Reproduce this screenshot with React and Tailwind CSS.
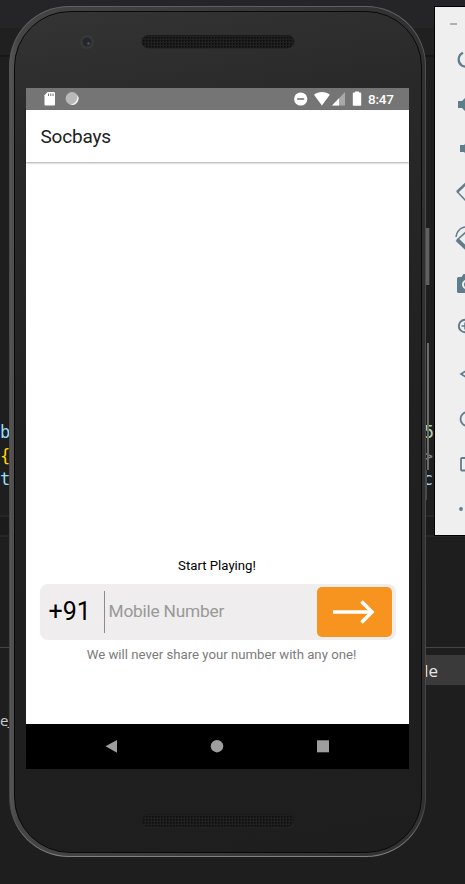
import React from "react";

const sans = "font-['Roboto','Noto_Sans',sans-serif]";

function Editor() {
  return (
    <div className="flex h-[884px] w-[465px] flex-col bg-[#1e1e1e] font-['DejaVu_Sans_Mono','Liberation_Mono',monospace] text-[17px] leading-[23px]">
      <div className="h-[28px] bg-[#252527]" />
      <div className="h-[29px] border-b-2 border-[#171717] bg-[#202021]" />
      <div className="h-[364px]" />
      <div className="flex h-[24px] justify-between text-[#9cdcfe]">
        <span>b</span>
        <span className="mr-[31px] text-[#b5cea8]">5</span>
      </div>
      <div className="flex h-[23px] justify-between text-[#ffd700]">
        <span>{"{"}</span>
        <span className="mr-[32px] text-[#808080]">&gt;</span>
      </div>
      <div className="flex h-[24px] justify-between text-[#9cdcfe]">
        <span>t</span>
        <span className="mr-[32px]">c</span>
      </div>
      <div className="h-[23px]" />
      <div className="h-[22px] border-y-2 border-[#262627] bg-[#1b1b1b]" />
      <div className="h-[110px]" />
      <div className="h-px bg-[#454545]" />
      <div className="h-[7px]" />
      <div className="ml-[418px] h-[30px] bg-[#3a3a3a] font-['Open_Sans','Noto_Sans',sans-serif] text-[17px] leading-[31px] text-[#e5e5e5]">
        <span>de</span>
      </div>
      <div className="h-[24px]" />
      <div className="font-['Open_Sans','Noto_Sans',sans-serif] text-[15px] leading-[23px] tracking-[-1px] text-[#cccccc]">e_</div>
    </div>
  );
}

function Speaker({ id }) {
  return (
    <svg width="157" height="16" viewBox="0 0 157 16">
      <defs>
        <pattern id={id} width="3" height="3" patternUnits="userSpaceOnUse">
          <rect width="3" height="3" fill="#202020" />
          <rect width="1.6" height="1.6" fill="#0c0c0c" />
        </pattern>
      </defs>
      <rect x="2" y="2.2" width="152.500" height="12.5" rx="6.2" fill="#444" opacity=".5" />
      <rect x="2" y="1.5" width="152" height="12.5" rx="6.2" fill={`url(#${id})`} stroke="#1a1a1a" />
    </svg>
  );
}

function StatusBar() {
  return (
    <div className="flex h-[22px] shrink-0 items-center justify-between bg-[#757575] text-white">
      <svg width="60" height="22" viewBox="0 0 60 22">
        <path d="M21.6 4H28a1 1 0 0 1 1 1v11.500a1 1 0 0 1-1 1h-8.500a1 1 0 0 1-1-1V7.200z" fill="#fff" />
        <path d="M22.500 5.500v2.500M24.800 5.500v2.500M27 5.500v2.500" stroke="#757575" strokeWidth="1" />
        <circle cx="46" cy="10.500" r="6.400" fill="#b9b9b9" />
        <path d="M51.500 7a6.400 6.400 0 0 1-7.500 9.500c4 .2 7.800-3.500 7.500-9.500z" fill="#f3f3f3" />
      </svg>
      <div className="flex items-center">
        <svg width="75" height="22" viewBox="0 0 75 22">
          <circle cx="7.700" cy="11" r="6.600" fill="#fff" />
          <path d="M4.200 11h7" stroke="#757575" strokeWidth="1.600" />
          <path d="M21 6.800C25.300 3.200 32.800 3.200 36.800 6.800L28.900 17.500z" fill="#fff" />
          <path d="M52 4v13.500H39z" fill="#a9a9a9" />
          <path d="M46 10.200v7.300h-7z" fill="#fff" />
          <path d="M62 4.500v-1h4v1h1.500a.7.7 0 0 1 .7.700V17a.7.7 0 0 1-.7.700h-7a.7.7 0 0 1-.7-.7V5.200a.7.7 0 0 1 .7-.7z" fill="#fff" />
        </svg>
        <span className="mr-[15px] w-[26px] text-[13.500px] font-medium leading-[22px] tracking-[-0.2px] whitespace-nowrap">8:47</span>
      </div>
    </div>
  );
}

function Screen() {
  return (
    <div className={`mx-auto flex h-[681px] w-[383px] flex-col bg-white ${sans}`}>
      <StatusBar />
      <header className="flex h-[52px] shrink-0 items-center pl-[14.500px] pt-[2px] text-[19px] tracking-[-0.2px] text-[#212121] shadow-[0_1px_2px_rgba(0,0,0,0.35)]">
        Socbays
      </header>
      <main className="flex flex-1 flex-col justify-end pb-[60px]">
        <p className="pr-px text-center text-[13.200px] leading-[18px] text-black">Start Playing!</p>
        <div className="mx-[13.500px] mt-[9px] flex h-[56px] items-center rounded-[8px] bg-[#efeded] pr-[3.500px]">
          <span className="w-[64px] pl-[9px] text-[25px] text-black">+91</span>
          <span className="h-[42px] w-[1.500px] bg-[#8c8c8c]" />
          <span className="ml-[3.500px] flex-1 text-[17.300px] tracking-[-0.2px] text-[#999]">Mobile Number</span>
          <button className="flex h-[50px] w-[75px] items-center justify-center rounded-[5px] bg-[#f79420]">
            <svg width="44" height="26" viewBox="0 0 44 26" fill="none" stroke="#fff" strokeWidth="3.600">
              <path d="M0 13h39M28.500 2.500L39 13 28.500 23.500" />
            </svg>
          </button>
        </div>
        <p className="mt-[6px] pl-[8px] text-center text-[13.200px] leading-[18px] text-[#7b7b7b]">
          We will never share your number with any one!
        </p>
      </main>
      <nav className="flex h-[45px] shrink-0 items-center bg-black">
        <svg width="383" height="45" viewBox="0 0 383 45" fill="#9e9e9e">
          <path d="M79.500 22.300L91 16v12.700z" />
          <circle cx="191" cy="22.200" r="6.200" />
          <rect x="291" y="16.300" width="12" height="12" />
        </svg>
      </nav>
    </div>
  );
}

function Phone() {
  return (
    <div className="absolute left-[9px] top-[6px] h-[851px] w-[417px] rounded-[60px] bg-[linear-gradient(180deg,#606060_0%,#4c4c4c_10%,#444_94%,#808080_100%)] p-px">
      <div className="h-full rounded-[59px] bg-[linear-gradient(90deg,#555_0%,#454545_2%,#3a3a3a_50%,#303030_100%)] p-[3.500px]">
        <div className="flex h-full flex-col rounded-[56px] border border-[#090909] bg-[linear-gradient(170deg,#343435_0%,#292929_15%,#202020_50%,#1e1e1e_100%)]">
          <div className="flex h-[76.500px] items-start pl-[65px] pt-[22px]">
            <svg width="14" height="16" viewBox="0 0 14 16">
              <circle cx="7" cy="8" r="7" fill="#37383a" />
              <circle cx="7" cy="8" r="4.500" fill="#24262b" />
              <circle cx="8.500" cy="9.500" r="1.300" fill="#505563" />
            </svg>
            <div className="ml-[46px]"><Speaker id="earpiece" /></div>
          </div>
          <Screen />
          <div className="flex h-[82px] justify-center pl-[2px] pt-[44px]">
            <Speaker id="loudspeaker" />
          </div>
        </div>
      </div>
    </div>
  );
}

function SideButtons() {
  return (
    <div className="absolute left-[426px] top-[228px] flex flex-col">
      <div className="h-[57px] w-[4px] border-r border-[#353535] bg-[#606060]" />
      <div className="mt-[58px] ml-px h-[127px] w-[2px] bg-[#6a6a6a]" />
      <div className="h-[30px] w-px bg-[#4b4b4b]" />
    </div>
  );
}

const tools = [
  ["power", <path d="M28 15.700a7.500 7.500 0 0 0-1 13l4 1.300" strokeWidth="2.200" />],
  ["volume up", <path d="M23 19h4l5-5v17l-5-5h-4z" fill="#607d8b" stroke="none" />],
  ["volume down", <path d="M25 18h4l5-5v17l-5-5h-4z" fill="#607d8b" stroke="none" />],
  ["rotate left", <><path d="M31 11.500L22 20" strokeWidth="2.600" /><path d="M22 19.500l9 9.500" strokeWidth="1.500" /></>],
  ["rotate right", <><path d="M32 14L22 23" strokeWidth="1.600" /><path d="M22 22.500l10 9.500" strokeWidth="3.800" /><path d="M21 20c1-7 6-11 12-10" strokeWidth="1.500" /></>],
  ["camera", <><path d="M23.500 15h3l2-3H38v19H23.500a1.500 1.500 0 0 1-1.500-1.500v-13a1.500 1.500 0 0 1 1.500-1.500z" fill="#607d8b" stroke="none" /><circle cx="32" cy="22.500" r="4" stroke="#efefef" strokeWidth="2" /></>],
  ["zoom", <><circle cx="30" cy="19" r="6.200" strokeWidth="2" /><path d="M26.500 19h7M30 15.500v7" strokeWidth="1.500" /></>],
  ["back", <path d="M36 15.500L26 22l10 6.500z" strokeWidth="1.700" />],
  ["home", <circle cx="32.500" cy="22" r="7" strokeWidth="1.800" />],
  ["overview", <rect x="26" y="16" width="13" height="12.500" rx="1" strokeWidth="1.800" />],
  ["more", <circle cx="26" cy="22" r="1.900" fill="#607d8b" stroke="none" />],
];

function Toolbar() {
  return (
    <div className="absolute left-[434px] top-[6px] flex h-[530px] w-[60px] flex-col border border-black bg-[#efefef]">
      <div className="flex h-[30px] items-center pl-[15px] pt-[4px]">
        <span className="h-[2px] w-[7px] bg-[#b1b1b1]" />
      </div>
      {tools.map(([name, drawing]) => (
        <svg key={name} className="shrink-0" width="58" height="45" viewBox="0 0 58 45" fill="none" stroke="#607d8b">
          {drawing}
        </svg>
      ))}
    </div>
  );
}

export default function App() {
  return (
    <div className="relative h-[884px] w-[465px] overflow-hidden">
      <Editor />
      <SideButtons />
      <Phone />
      <Toolbar />
    </div>
  );
}
